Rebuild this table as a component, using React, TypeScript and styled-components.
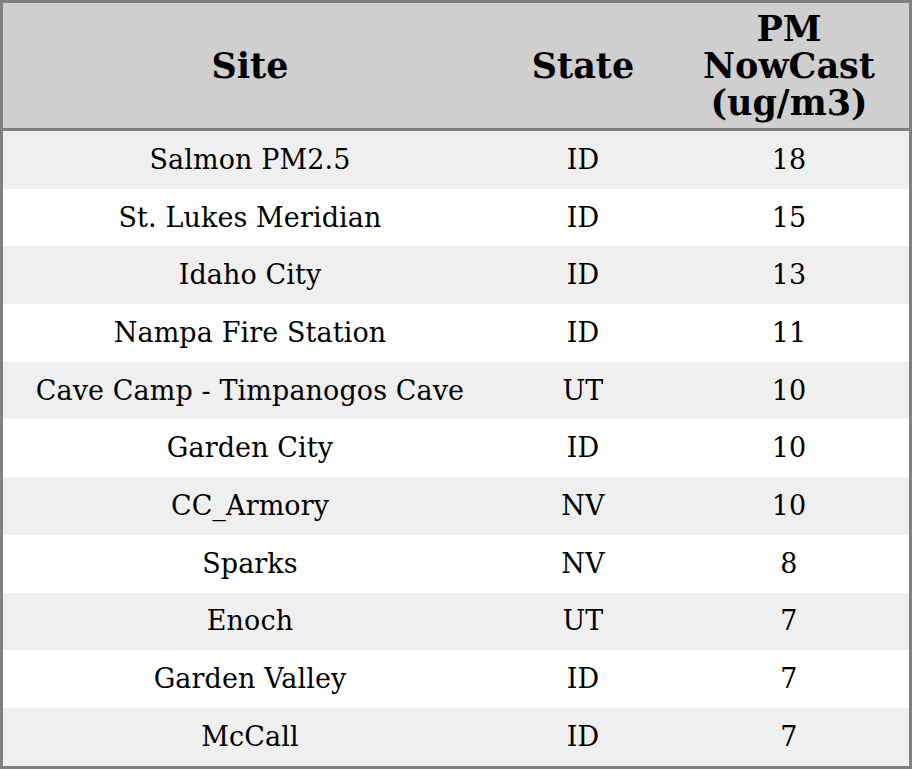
import React from "react";
import styled, { createGlobalStyle } from "styled-components";

const Global = createGlobalStyle`
  html, body { margin: 0; padding: 0; background: #ffffff; }
  body { font-family: "DejaVu Serif", "Liberation Serif", serif; color: #000; }
`;

const Table = styled.table`
  width: 912px;
  border: 3px solid #808080;
  border-spacing: 0;
  border-collapse: separate;
  table-layout: fixed;
  box-sizing: border-box;
`;

const HeadCell = styled.th`
  height: 128px;
  padding: 0 4px 0;
  background: #cfcfcf;
  border-bottom: 3px solid #808080;
  font-family: "DejaVu Serif", serif;
  font-weight: bold;
  font-size: 35px;
  line-height: 37px;
  text-align: center;
  vertical-align: middle;
  box-sizing: border-box;
`;

const Row = styled.tr<{ $alt: boolean }>`
  background: ${(p) => (p.$alt ? "#efefef" : "#ffffff")};
`;

const Cell = styled.td`
  height: 57.7px;
  padding: 0 4px;
  font-size: 27px;
  line-height: 30px;
  letter-spacing: 0.1px;
  text-align: center;
  vertical-align: middle;
  box-sizing: border-box;
`;

const rows: [string, string, number][] = [
  ["Salmon PM2.5", "ID", 18],
  ["St. Lukes Meridian", "ID", 15],
  ["Idaho City", "ID", 13],
  ["Nampa Fire Station", "ID", 11],
  ["Cave Camp - Timpanogos Cave", "UT", 10],
  ["Garden City", "ID", 10],
  ["CC_Armory", "NV", 10],
  ["Sparks", "NV", 8],
  ["Enoch", "UT", 7],
  ["Garden Valley", "ID", 7],
  ["McCall", "ID", 7],
];

export default function App() {
  return (
    <>
      <Global />
      <Table>
        <colgroup>
          <col style={{ width: 494 }} />
          <col style={{ width: 172 }} />
          <col style={{ width: 240 }} />
        </colgroup>
        <thead>
          <tr>
            <HeadCell>Site</HeadCell>
            <HeadCell>State</HeadCell>
            <HeadCell>
              PM
              <br />
              NowCast
              <br />
              (ug/m3)
            </HeadCell>
          </tr>
        </thead>
        <tbody>
          {rows.map(([site, st, v], i) => (
            <Row key={site} $alt={i % 2 === 0}>
              <Cell>{site}</Cell>
              <Cell>{st}</Cell>
              <Cell>{v}</Cell>
            </Row>
          ))}
        </tbody>
      </Table>
    </>
  );
}
